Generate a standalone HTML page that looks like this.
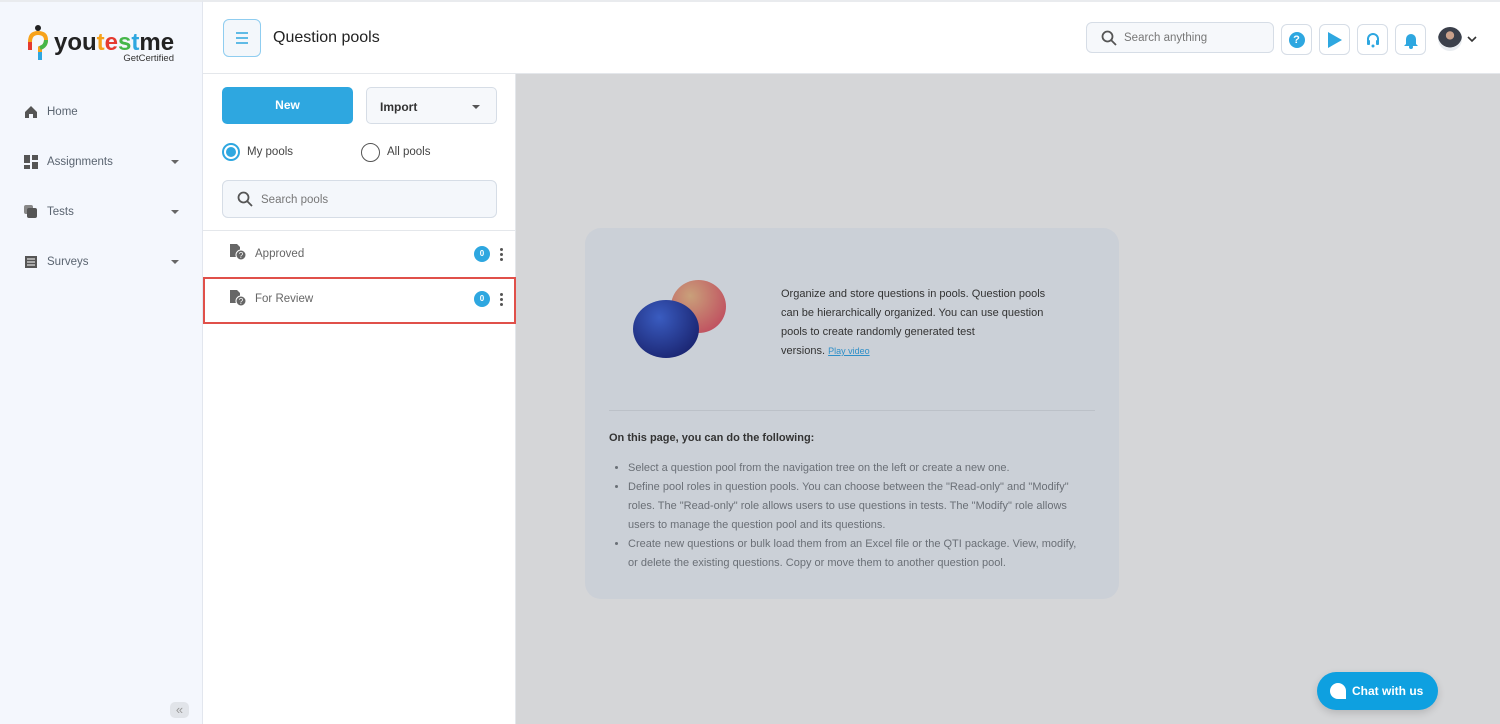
<!DOCTYPE html>
<html><head><meta charset="utf-8"><style>
*{box-sizing:border-box;margin:0;padding:0}
body{width:1500px;height:724px;overflow:hidden;font-family:"Liberation Sans",sans-serif;background:#fff;position:relative;color:#333}
.side{position:absolute;left:0;top:0;width:203px;height:724px;background:#f4f7fd;border-right:1px solid #e2e6ee;border-top:2px solid #e9ebee}
.logo{position:absolute;left:28px;top:22px}
.nav{position:absolute;left:24px;font-size:11.5px;color:#5a6470;display:flex;align-items:center;width:155px}
.nav svg{margin-right:9px}
.nav .car{margin-left:auto;width:0;height:0;border-left:4px solid transparent;border-right:4px solid transparent;border-top:4px solid #666}
.top{position:absolute;left:203px;top:0;right:0;height:74px;border-bottom:1px solid #e4e7eb;border-top:2px solid #e9ebee;background:#fff}
.list{position:absolute;left:203px;top:74px;width:313px;height:650px;background:#fff;border-right:1px solid #e4e7eb}
.main{position:absolute;left:516px;top:74px;right:0;bottom:0;background:#d5d6d8}
.card{position:absolute;left:69px;top:154px;width:534px;height:371px;background:#cbd0d7;border-radius:16px}
.ib{position:absolute;top:22px;width:31px;height:31px;border:1px solid #d6dde6;border-radius:6px;background:#fff;display:flex;align-items:center;justify-content:center}
.badge{position:absolute;left:271px;width:16px;height:16px;border-radius:50%;background:#2ea7e0;color:#fff;font-size:8px;font-weight:bold;text-align:center;line-height:16px}
.dots{position:absolute;left:297px;width:3px}
.dots i{display:block;width:3px;height:3px;border-radius:50%;background:#555;margin-bottom:2px}
ul{list-style:disc;padding-left:19px}
li{font-size:11px;color:#6a6f76;line-height:19px}
</style></head><body>
<div class="side">
 <div class="logo">
  <svg width="150" height="40" viewBox="0 0 150 40">
   <circle cx="10" cy="4" r="3" fill="#222"/>
   <path d="M2 18 Q2 9 10 9 Q18 9 18 16 Q18 22 12 24 L12 28" stroke="#f7a21b" stroke-width="4" fill="none"/>
   <path d="M2 18 L2 26" stroke="#e53a2f" stroke-width="4"/>
   <path d="M12 28 L12 36" stroke="#2ea7e0" stroke-width="4"/>
   <path d="M18 16 Q18 22 12 24" stroke="#45b649" stroke-width="4" fill="none"/>
   <text x="26" y="26" font-family="Liberation Sans" font-weight="bold" font-size="24" fill="#222">you<tspan fill="#f7a21b">t</tspan><tspan fill="#e53a2f">e</tspan><tspan fill="#45b649">s</tspan><tspan fill="#2ea7e0">t</tspan>me</text>
   <text x="146" y="37" text-anchor="end" font-size="9.5" fill="#333">GetCertified</text>
  </svg>
 </div>
 <div class="nav" style="top:103px"><svg width="14" height="14" viewBox="0 0 14 14"><path d="M1 7 L7 1 L13 7 V13 H9 V9 H5 V13 H1Z" fill="#555"/></svg>Home</div>
 <div class="nav" style="top:153px"><svg width="14" height="14"><rect x="0" y="0" width="6" height="8" fill="#555"/><rect x="8" y="0" width="6" height="5" fill="#555"/><rect x="0" y="10" width="6" height="4" fill="#555"/><rect x="8" y="7" width="6" height="7" fill="#555"/></svg>Assignments<span class="car"></span></div>
 <div class="nav" style="top:203px"><svg width="14" height="14"><rect x="0" y="0" width="9" height="9" rx="2" fill="#888"/><rect x="3" y="3" width="10" height="10" rx="2" fill="#555"/></svg>Tests<span class="car"></span></div>
 <div class="nav" style="top:253px"><svg width="14" height="14"><rect x="1" y="1" width="12" height="12" fill="#555"/><path d="M3 4H11M3 7H11M3 10H11" stroke="#fff"/></svg>Surveys<span class="car"></span></div>
 <div style="position:absolute;left:170px;top:700px;width:19px;height:16px;border-radius:5px;background:#e1e4e9;color:#999;font-size:13px;text-align:center;line-height:15px">«</div>
</div>
<div class="top">
 <div style="position:absolute;left:20px;top:17px;width:38px;height:38px;border:1px solid #8fcdf0;border-radius:6px;background:#f3f7fb"><svg width="36" height="36"><path d="M12 13H24M12 18H24M12 23H24" stroke="#2ea7e0" stroke-width="1.6"/></svg></div>
 <div style="position:absolute;left:70px;top:27px;font-size:16px;font-weight:500;color:#222">Question pools</div>
 <div style="position:absolute;left:883px;top:20px;width:188px;height:31px;border:1px solid #d6dde6;border-radius:6px;background:#f6f8fb;font-size:11.5px;color:#777;padding:9px 0 0 37px">Search anything
  <svg style="position:absolute;left:14px;top:7px" width="16" height="16"><circle cx="6.5" cy="6.5" r="5" stroke="#555" stroke-width="1.8" fill="none"/><path d="M10 10L15 15" stroke="#555" stroke-width="1.8"/></svg></div>
 <div class="ib" style="left:1078px"><div style="width:16px;height:16px;border-radius:50%;background:#2ea7e0;color:#fff;font-size:11px;font-weight:bold;text-align:center;line-height:16px">?</div></div>
 <div class="ib" style="left:1116px"><svg width="16" height="18"><path d="M1 1L15 9L1 17Z" fill="#2ea7e0"/></svg></div>
 <div class="ib" style="left:1154px"><svg width="16" height="16"><path d="M3 9V7a5 5 0 0110 0v2" stroke="#2ea7e0" stroke-width="2" fill="none"/><rect x="2" y="8" width="3" height="5" rx="1" fill="#2ea7e0"/><rect x="11" y="8" width="3" height="5" rx="1" fill="#2ea7e0"/><circle cx="8" cy="14" r="1.5" fill="#2ea7e0"/></svg></div>
 <div class="ib" style="left:1192px"><svg width="16" height="18"><path d="M3 13V8a5 5 0 0110 0v5l2 2H1z" fill="#2ea7e0"/><circle cx="8" cy="16" r="2" fill="#2ea7e0"/></svg></div>
 <div style="position:absolute;left:1235px;top:25px;width:24px;height:24px;border-radius:50%;background:radial-gradient(circle at 50% 35%,#c9a08a 0 20%,#3a3f4a 22%,#3a3f4a 60%,#e8ecf0 62%)"></div>
 <svg style="position:absolute;left:1264px;top:33px" width="10" height="8"><path d="M1 2L5 6L9 2" stroke="#333" stroke-width="1.6" fill="none"/></svg>
</div>
<div class="list">
 <div style="position:absolute;left:19px;top:13px;width:131px;height:37px;background:#2ea7e0;border-radius:5px;color:#fff;font-size:12px;font-weight:bold;text-align:center;line-height:37px">New</div>
 <div style="position:absolute;left:163px;top:13px;width:131px;height:37px;border:1px solid #d6dde6;border-radius:5px;background:#f6f8fb;font-size:12px;font-weight:bold;color:#333;padding:12px 0 0 13px">Import<span style="position:absolute;right:16px;top:17px;border-left:4px solid transparent;border-right:4px solid transparent;border-top:4px solid #555"></span></div>
 <div style="position:absolute;left:19px;top:69px;width:18px;height:18px;border-radius:50%;border:2px solid #2ea7e0;padding:2px"><div style="width:10px;height:10px;border-radius:50%;background:#2ea7e0"></div></div>
 <div style="position:absolute;left:44px;top:72px;font-size:11.5px;color:#444">My pools</div>
 <div style="position:absolute;left:158px;top:69px;width:19px;height:19px;border-radius:50%;border:1.5px solid #555"></div>
 <div style="position:absolute;left:184px;top:72px;font-size:11.5px;color:#444">All pools</div>
 <div style="position:absolute;left:19px;top:106px;width:275px;height:38px;border:1px solid #d6dde6;border-radius:6px;background:#f4f7fb;font-size:11.5px;color:#777;padding:13px 0 0 38px">Search pools
  <svg style="position:absolute;left:14px;top:10px" width="16" height="16"><circle cx="6.5" cy="6.5" r="5" stroke="#555" stroke-width="1.8" fill="none"/><path d="M10 10L15 15" stroke="#555" stroke-width="1.8"/></svg></div>
 <div style="position:absolute;left:0;top:156px;width:312px;border-top:1px solid #e4e7eb"></div>
 <svg style="position:absolute;left:26px;top:169px" width="18" height="18"><path d="M1 1H8L11 4V14H1Z" fill="#666"/><circle cx="12" cy="12" r="5" fill="#666" stroke="#fff"/><text x="12" y="15" font-size="8" fill="#fff" text-anchor="middle">?</text></svg>
 <div style="position:absolute;left:52px;top:174px;font-size:11.5px;color:#666">Approved</div>
 <div class="badge" style="top:172px">0</div><div class="dots" style="top:174px"><i></i><i></i><i></i></div>
 <div style="position:absolute;left:0;top:203px;width:313px;height:47px;border:2px solid #e0504a"></div>
 <svg style="position:absolute;left:26px;top:215px" width="18" height="18"><path d="M1 1H8L11 4V14H1Z" fill="#666"/><circle cx="12" cy="12" r="5" fill="#666" stroke="#fff"/><text x="12" y="15" font-size="8" fill="#fff" text-anchor="middle">?</text></svg>
 <div style="position:absolute;left:52px;top:219px;font-size:11.5px;color:#666">For Review</div>
 <div class="badge" style="top:217px">0</div><div class="dots" style="top:219px"><i></i><i></i><i></i></div>
</div>
<div class="main">
 <div class="card">
  <div style="position:absolute;left:86px;top:52px;width:55px;height:53px;border-radius:50%;background:radial-gradient(circle at 35% 30%,#c9a07a,#c05060 80%)"></div>
  <div style="position:absolute;left:48px;top:72px;width:66px;height:58px;border-radius:50%;background:radial-gradient(circle at 40% 30%,#3a5cc0,#1a2470 80%)"></div>
  <div style="position:absolute;left:196px;top:57px;width:275px;font-size:11px;line-height:19px;color:#333">Organize and store questions in pools. Question pools can be hierarchically organized. You can use question pools to create randomly generated test<br>versions. <span style="font-size:9px;color:#2e8fc8;text-decoration:underline">Play video</span></div>
  <div style="position:absolute;left:24px;top:182px;width:486px;border-top:1px solid #bcc1c8"></div>
  <div style="position:absolute;left:24px;top:204px;font-size:11px;font-weight:bold;color:#333">On this page, you can do the following:</div>
  <ul style="position:absolute;left:24px;top:231px;width:478px">
   <li>Select a question pool from the navigation tree on the left or create a new one.</li>
   <li>Define pool roles in question pools. You can choose between the "Read-only" and "Modify" roles. The "Read-only" role allows users to use questions in tests. The "Modify" role allows users to manage the question pool and its questions.</li>
   <li>Create new questions or bulk load them from an Excel file or the QTI package. View, modify, or delete the existing questions. Copy or move them to another question pool.</li>
  </ul>
 </div>
 <div style="position:absolute;left:801px;top:598px;width:121px;height:38px;border-radius:19px;background:#0ea0e0;color:#fff;font-size:12px;font-weight:bold;padding:12px 0 0 35px;box-shadow:0 3px 8px rgba(0,0,0,.15)">Chat with us
  <div style="position:absolute;left:13px;top:11px;width:16px;height:16px;border-radius:50% 50% 50% 0/50% 50% 50% 0;background:#fff;transform:scaleX(-1)"></div></div>
</div>
</body></html>
